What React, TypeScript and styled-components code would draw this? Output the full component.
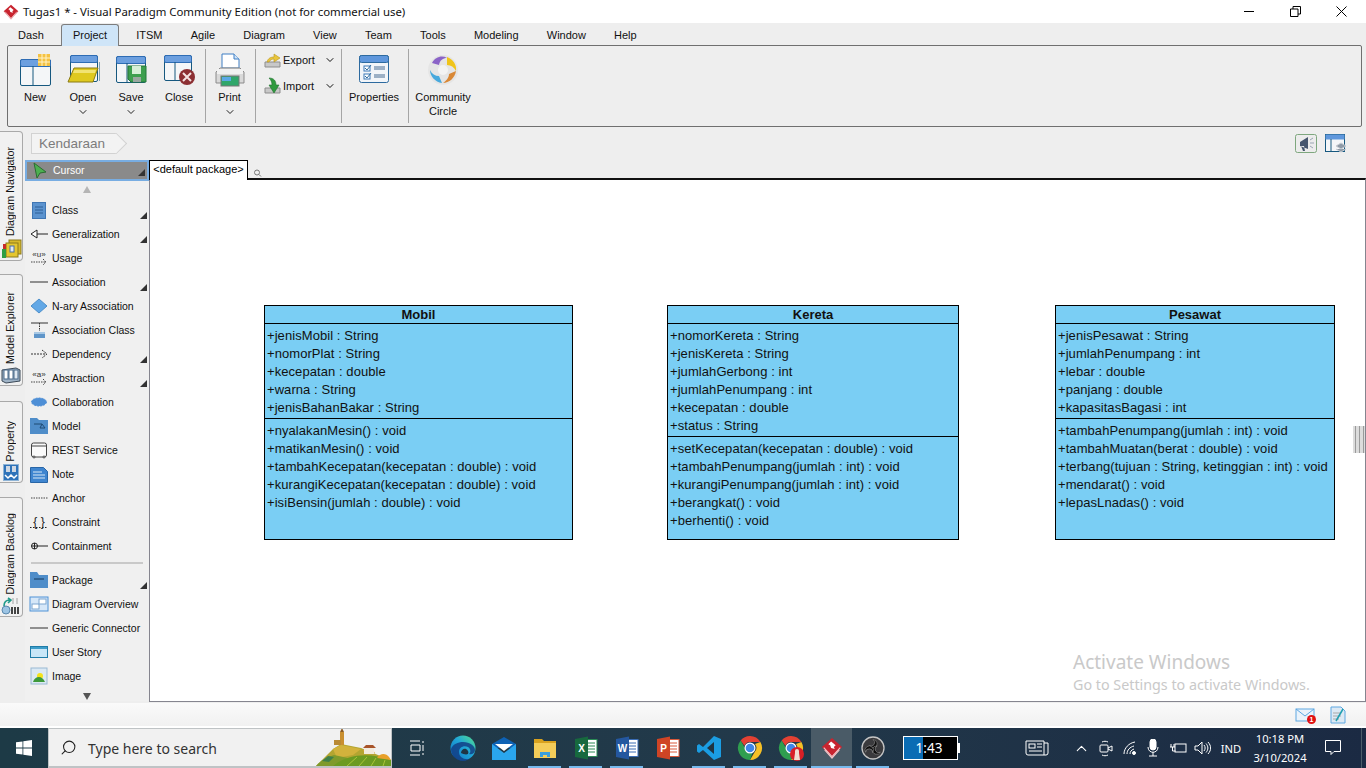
import { ReactNode } from "react";
import styled, { createGlobalStyle } from "styled-components";
import { ChevronDown, ChevronUp, Search } from "lucide-react";

const GlobalStyle = createGlobalStyle`
  html, body { margin: 0; padding: 0; background: #eeeeee; }
  body { font-family: "Liberation Sans", sans-serif; overflow: hidden; }
  * { box-sizing: border-box; }
`;

const uiFont = `"Liberation Sans", Arial, sans-serif`;

/* window chrome */
const Page = styled.div`
  width: 1366px;
  height: 768px;
  display: flex;
  flex-direction: column;
  overflow: hidden;
  background: #eeeeee;
`;

const TitleBar = styled.div`
  height: 23px;
  flex: none;
  background: #fff;
  display: flex;
  align-items: center;
  padding-left: 3px;
`;

const TitleText = styled.span`
  margin-left: 4px;
  font: 11.4px "Noto Sans", sans-serif;
  color: #111;
  white-space: nowrap;
`;

const WindowButtons = styled.div`
  margin-left: auto;
  display: flex;
  height: 23px;
  padding-right: 2px;
`;

const WindowButton = styled.div`
  width: 46px;
  display: flex;
  align-items: center;
  justify-content: center;
`;

const TabRow = styled.div`
  height: 22px;
  flex: none;
  display: flex;
  align-items: flex-end;
  padding-left: 4px;
`;

const Tab = styled.div<{ $active?: boolean }>`
  font: 11px ${uiFont};
  color: #111;
  height: ${(p) => (p.$active ? "22px" : "21px")};
  line-height: ${(p) => (p.$active ? "21px" : "22px")};
  padding: 0 ${(p) => (p.$active ? "11px" : "14.1px")};
  margin: ${(p) => (p.$active ? "0 3px -1px 3px" : "0")};
  position: relative;
  ${(p) =>
    p.$active
      ? `background: #cfe5f8; border: 1px solid #7d7d7d; border-bottom: none; border-radius: 3px 3px 0 0;`
      : ""}
`;

const Ribbon = styled.div`
  margin: 0 4px 0 7px;
  height: 82px;
  flex: none;
  border: 1px solid #6f6f6f;
  border-radius: 2px;
  display: flex;
  padding: 3px 0 3px 3px;
  background: #eeeeee;
`;

const RibbonGroup = styled.div`
  display: flex;
  height: 100%;
  padding-right: 2px;
  border-right: 1px solid #a5a5a5;
  &:last-child { border-right: none; }
`;

const RibbonButton = styled.div<{ $width: number }>`
  width: ${(p) => p.$width}px;
  display: flex;
  flex-direction: column;
  align-items: center;
  font: 11px/14px ${uiFont};
  color: #111;
  text-align: center;
`;

const RibbonIcon = styled.div`
  height: 36px;
  margin-top: 3px;
  margin-bottom: 2px;
  display: flex;
  align-items: center;
  justify-content: center;
`;

const MenuArrow = styled.div`
  height: 14px;
  margin-top: 1px;
  display: flex;
  align-items: center;
  color: #222;
`;

const SmallStack = styled.div`
  width: 83px;
  display: flex;
  flex-direction: column;
  gap: 4px;
  padding: 0 3px 0 8px;
`;

const SmallButton = styled.div`
  height: 22px;
  display: flex;
  align-items: center;
  font: 11px ${uiFont};
  color: #111;
  gap: 1px;
  & > svg:last-child { margin-left: auto; }
`;

/* middle area */
const Workspace = styled.div`
  flex: 1;
  display: flex;
  min-height: 0;
`;

const SideTabs = styled.div`
  width: 25px;
  flex: none;
  padding-top: 4px;
  display: flex;
  flex-direction: column;
`;

const SideTab = styled.div<{ $height: number; $gap: number }>`
  width: 23px;
  flex: none;
  height: ${(p) => p.$height}px;
  margin-bottom: ${(p) => p.$gap}px;
  background: #f1f1f1;
  border: 1px solid #a9a9a9;
  border-left: none;
  border-radius: 0 4px 4px 0;
  display: flex;
  flex-direction: column;
  align-items: center;
  justify-content: flex-end;
  padding-bottom: 1px;
  gap: 3px;
`;

const SideLabel = styled.span`
  writing-mode: vertical-rl;
  transform: rotate(180deg);
  font: 10.7px ${uiFont};
  color: #111;
  white-space: nowrap;
  margin-right: 3px;
`;

const Main = styled.div`
  flex: 1;
  display: flex;
  flex-direction: column;
  min-width: 0;
`;

const CrumbRow = styled.div`
  height: 33px;
  flex: none;
  display: flex;
  align-items: flex-start;
  padding: 6px 0 0 6px;
  position: relative;
`;

const Crumb = styled.div`
  width: 86px;
  height: 21px;
  background: #f3f3f3;
  border: 1px solid #d2d2d2;
  border-right: none;
  font: 13.5px/19px ${uiFont};
  color: #7c7c7c;
  padding-left: 7px;
  position: relative;
  &::after {
    content: "";
    position: absolute;
    right: -7px;
    top: 2px;
    width: 14px;
    height: 14px;
    background: #f3f3f3;
    border-top: 1px solid #d2d2d2;
    border-right: 1px solid #d2d2d2;
    transform: rotate(45deg);
  }
  & > span {
    position: relative;
    z-index: 1;
  }
`;

const CrumbTools = styled.div`
  margin-left: auto;
  display: flex;
  gap: 8px;
  padding-right: 20px;
  padding-top: 1px;
`;

const MainBody = styled.div`
  flex: 1;
  display: flex;
  min-height: 0;
`;

const Palette = styled.div`
  width: 124px;
  flex: none;
  background: #f0f0f0;
  display: flex;
  flex-direction: column;
`;

const PaletteRow = styled.div<{ $selected?: boolean }>`
  height: ${(p) => (p.$selected ? "21px" : "24px")};
  flex: none;
  display: flex;
  align-items: center;
  position: relative;
  font: 10.5px ${uiFont};
  white-space: nowrap;
  color: ${(p) => (p.$selected ? "#fff" : "#111")};
  background: ${(p) => (p.$selected ? "#8a8a8a" : "transparent")};
  border: ${(p) => (p.$selected ? "2px solid #78ade2" : "none")};
  padding: ${(p) => (p.$selected ? "0 0 1px 3px" : "0 0 0 5px")};
`;

const PaletteIconBox = styled.span<{ $selected?: boolean }>`
  width: ${(p) => (p.$selected ? "23px" : "22px")};
  flex: none;
  display: flex;
  align-items: center;
  margin-left: ${(p) => (p.$selected ? "0" : "-1px")};
  margin-right: ${(p) => (p.$selected ? "0" : "1px")};
`;

const Corner = styled.span`
  position: absolute;
  right: 2px;
  bottom: 3px;
  width: 0;
  height: 0;
  border-left: 7px solid transparent;
  border-bottom: 7px solid #333;
`;

const ScrollMark = styled.div<{ $down?: boolean }>`
  height: ${(p) => (p.$down ? "16px" : "17px")};
  flex: none;
  display: flex;
  align-items: center;
  justify-content: center;
  &::before {
    content: "";
    width: 0;
    height: 0;
    border-left: 4px solid transparent;
    border-right: 4px solid transparent;
    ${(p) =>
      p.$down
        ? "border-top: 7px solid #555;"
        : "border-bottom: 7px solid #b5b5b5;"}
  }
`;

const PaletteSeparator = styled.div`
  height: 2px;
  flex: none;
  background: #c9c9c9;
  margin: 4px 6px 4px 6px;
`;

const DiagramColumn = styled.div`
  flex: 1;
  display: flex;
  flex-direction: column;
  min-width: 0;
`;

const PackageRow = styled.div`
  height: 20px;
  flex: none;
  display: flex;
  align-items: flex-start;
`;

const PackageTab = styled.div`
  height: 20px;
  width: 99px;
  background: #fff;
  border: 1px solid #000;
  border-bottom: none;
  font: 11px/17px ${uiFont};
  color: #000;
  text-align: center;
  white-space: nowrap;
  position: relative;
  z-index: 1;
`;

const PackageSearch = styled.svg`
  margin: 8px 0 0 4px;
`;

const Canvas = styled.div`
  height: 524px;
  flex: none;
  margin-top: -2px;
  background: #fff;
  border-top: 2px solid #111;
  border-left: 1px solid #85858f;
  border-right: 1px solid #85858f;
  border-bottom: 1px solid #85858f;
  position: relative;
  overflow: hidden;
`;

const ClassBox = styled.div<{ $left: number; $top: number; $width: number }>`
  position: absolute;
  left: ${(p) => p.$left}px;
  top: ${(p) => p.$top}px;
  width: ${(p) => p.$width}px;
  height: 235px;
  background: #7acef4;
  border: 1px solid #000;
  font-family: "Liberation Sans", Arial, sans-serif;
  font-size: 13px;
  color: #111;
  display: flex;
  flex-direction: column;
`;

const ClassName = styled.div`
  height: 18px;
  line-height: 18px;
  text-align: center;
  font-weight: bold;
  border-bottom: 1px solid #000;
  flex: none;
`;

const ClassSection = styled.div<{ $fill?: boolean }>`
  padding: 3px 0 0 2px;
  flex: ${(p) => (p.$fill ? "1" : "none")};
  ${(p) => (p.$fill ? "" : "border-bottom: 1px solid #000; padding-bottom: 1px;")}
`;

const ClassRow = styled.div`
  height: 18px;
  line-height: 18px;
  white-space: nowrap;
  letter-spacing: 0.07px;
`;

const Watermark = styled.div`
  position: absolute;
  left: 923px;
  top: 470px;
  color: #c9c9c9;
  font: 19px/24px "Noto Sans", sans-serif;
  white-space: nowrap;
  & > small {
    display: block;
    font-size: 14.3px;
    line-height: 22px;
  }
`;

const SplitGrip = styled.div`
  position: absolute;
  right: 0;
  top: 246px;
  width: 12px;
  height: 27px;
  background: repeating-linear-gradient(90deg, #dcdcdc 0 2px, #9a9a9a 2px 3px, #dcdcdc 3px 4px);
`;

const StatusBar = styled.div`
  height: 23px;
  flex: none;
  margin-top: 2px;
  background: linear-gradient(#fafafa, #f1f1f1);
  display: flex;
  align-items: center;
  justify-content: flex-end;
  gap: 14px;
  padding-right: 20px;
`;

/* taskbar */
const WhiteGap = styled.div`
  height: 2px;
  flex: none;
  background: #fff;
`;

const Taskbar = styled.div`
  height: 40px;
  flex: none;
  background: linear-gradient(90deg, #1d3a46 0%, #22394a 55%, #1b2a43 100%);
  display: flex;
  align-items: stretch;
  color: #fff;
`;

const StartButton = styled.div`
  width: 48px;
  display: flex;
  align-items: center;
  justify-content: center;
`;

const SearchBox = styled.div`
  width: 344px;
  background: #f1f1f1;
  border: 1px solid #bfc3c5;
  border-bottom-width: 2px;
  display: flex;
  align-items: center;
  padding-left: 11px;
  position: relative;
  overflow: hidden;
  color: #222;
  font: 14px "Noto Sans", sans-serif;
`;

const SearchText = styled.span`
  margin: 2px 0 0 11px;
  color: #333;
`;

const SearchArt = styled.svg`
  position: absolute;
  right: 0;
  bottom: 0;
`;

const TaskCell = styled.div<{ $width?: number; $running?: boolean; $active?: boolean }>`
  width: ${(p) => p.$width ?? 41}px;
  display: flex;
  align-items: center;
  justify-content: center;
  position: relative;
  background: ${(p) => (p.$active ? "#4a5b67" : "transparent")};
  ${(p) =>
    p.$running
      ? `&::after {
          content: "";
          position: absolute;
          bottom: 0;
          left: ${p.$active ? 0 : 4}px;
          right: ${p.$active ? 0 : 4}px;
          height: 2px;
          background: #76b9ed;
        }`
      : ""}
`;

const TimerBox = styled.div`
  width: 55px;
  height: 24px;
  margin: 8px 0 0 10px;
  padding-right: 3px;
  border: 1px solid #fff;
  background: linear-gradient(90deg, #0a6cb4 0 19px, #000 19px);
  font: 13.5px/22px "Noto Sans", sans-serif;
  text-align: center;
  color: #fff;
  position: relative;
  &::after {
    content: "";
    position: absolute;
    right: -3px;
    top: 6px;
    width: 2px;
    height: 10px;
    background: #fff;
  }
`;

const Tray = styled.div`
  margin-left: auto;
  display: flex;
  align-items: stretch;
`;

const TrayCell = styled.div<{ $width: number }>`
  width: ${(p) => p.$width}px;
  display: flex;
  align-items: center;
  justify-content: center;
  flex-direction: column;
  font: 11.2px/19px "Noto Sans", sans-serif;
  color: #fff;
  white-space: nowrap;
`;

const DesktopEdge = styled.div`
  width: 5px;
  border-left: 1px solid #4b5d69;
`;

/* drawings */
function Frame({ x = 0, y = 0, w = 28, h = 26, split = 12 }: { x?: number; y?: number; w?: number; h?: number; split?: number }) {
  return (
    <g>
      <rect x={x + 0.5} y={y + 0.5} width={w} height={h} rx="1.5" fill="#f4f6f8" stroke="#16587f" />
      <rect x={x + 0.5} y={y + 0.5} width={w} height="7" rx="1.5" fill="#6c9fdf" stroke="#2e6cb4" />
      <path d={`M${x + split} ${y + 7}V${y + h}`} stroke="#16587f" />
    </g>
  );
}

function NewIcon() {
  return (
    <svg width="34" height="34" viewBox="0 0 34 34">
      <Frame x={2} y={6} w={30} h={26} split={13} />
      <rect x="20" y="1" width="12" height="12" fill="#f5c242" />
      <path d="M24 1v12M28 1v12M20 5h12M20 9h12" stroke="#fff3c8" />
    </svg>
  );
}

function OpenIcon() {
  return (
    <svg width="34" height="34" viewBox="0 0 34 34">
      <Frame x={4} y={2} w={27} h={26} split={30} />
      <path d="M8 15h24l-5 14H2z" fill="#dfc91f" stroke="#8a7a12" />
      <path d="M8 17h22l-1 3H7z" fill="#f1e372" />
    </svg>
  );
}

function SaveIcon() {
  return (
    <svg width="34" height="34" viewBox="0 0 34 34">
      <Frame x={2} y={3} w={29} h={26} split={11} />
      <path d="M14 13h18v16H17l-3-3z" fill="#3d9f4e" stroke="#23763a" />
      <rect x="18" y="13" width="9" height="8" fill="#d6efd7" />
      <rect x="19" y="24" width="8" height="5" fill="#9aa7a0" />
    </svg>
  );
}

function CloseIcon() {
  return (
    <svg width="34" height="34" viewBox="0 0 34 34">
      <Frame x={2} y={2} w={27} h={25} split={11} />
      <circle cx="25" cy="24" r="8" fill="#8c2f33" />
      <path d="M21 20l8 8M29 20l-8 8" stroke="#f4e2e2" strokeWidth="2" />
    </svg>
  );
}

function PrintIcon() {
  return (
    <svg width="34" height="36" viewBox="0 0 34 36">
      <path d="M9 2h12l5 5v9H9z" fill="#fff" stroke="#3f7fc4" />
      <path d="M21 2v5h5" fill="#cfe3f7" stroke="#3f7fc4" />
      <path d="M7 16h20l4 4v11H3V20z" fill="#d9d9d9" stroke="#8b8b8b" />
      <rect x="4" y="17" width="26" height="5" fill="#f1f1f1" />
      <rect x="8" y="24" width="18" height="10" fill="#2fa66a" stroke="#777" />
      <rect x="9" y="25" width="9" height="4" fill="#5aa9e6" />
    </svg>
  );
}

function ExportIcon({ up }: { up?: boolean }) {
  return (
    <svg width="18" height="18" viewBox="0 0 18 18">
      <path d="M1 11h15v5H1z" fill="#c8c8c8" stroke="#8d8d8d" />
      <path d={up ? "M3 11c1-4 4-5 7-5V3l6 4-6 4V8c-2 0-4 1-5 3z" : "M5 1c5 0 7 3 7 7h3l-5 8-5-8h3c0-3-1-5-3-7z"} fill={up ? "#e9c53c" : "#2f9a3e"} stroke={up ? "#b8951d" : "#1f6f2b"} strokeWidth="0.6" />
    </svg>
  );
}

function PropertiesIcon() {
  return (
    <svg width="34" height="34" viewBox="0 0 34 34">
      <rect x="2.5" y="2.5" width="29" height="27" rx="2" fill="#f2f5f9" stroke="#2d6a9f" />
      <rect x="2.5" y="2.5" width="29" height="7" rx="2" fill="#5f97dc" stroke="#2d6a9f" />
      <rect x="7" y="13" width="6" height="5" fill="#fff" stroke="#3b79b8" />
      <rect x="7" y="21" width="6" height="5" fill="#fff" stroke="#3b79b8" />
      <path d="M8 15l2 2 4-5M8 23l2 2 4-5" stroke="#2d6a9f" fill="none" />
      <rect x="17" y="13" width="11" height="4" fill="#9cb0c6" />
      <rect x="17" y="21" width="11" height="4" fill="#9cb0c6" />
    </svg>
  );
}

function CircleIcon() {
  return (
    <svg width="32" height="32" viewBox="0 0 32 32">
      <circle cx="16" cy="16" r="15" fill="#e5e5e5" />
      <path d="M5 9c3-6 10-8 15-5-4 0-7 2-8 7z" fill="#8a63c7" />
      <path d="M20 3c6 2 10 8 9 14-2-4-5-6-9-6z" fill="#f0c419" />
      <path d="M29 17c-1 7-7 12-13 12 3-2 6-5 6-9z" fill="#d98836" />
      <path d="M15 29C8 28 3 22 3 16c2 4 5 6 9 6z" fill="#47a9dd" />
      <circle cx="16" cy="16" r="5" fill="#f3f3f3" />
    </svg>
  );
}

const paletteIcons: Record<string, ReactNode> = {
  Cursor: <path d="M4 3l12 9-6 1-3 5z" fill="#4cb050" stroke="#2c6c33" />,
  Class: (
    <g>
      <rect x="3.500" y="2.500" width="13" height="16" fill="#5b93cf" stroke="#3f76b3" />
      <path d="M6 7h8M6 10h8M6 13h8" stroke="#2f5f95" />
    </g>
  ),
  Generalization: <path d="M8 6l-6 4 6 4zM8 10h11" fill="#fff" stroke="#222" />,
  Usage: (
    <g>
      <text x="10" y="9" fontSize="8" fontFamily="Liberation Sans" textAnchor="middle" fill="#333">«u»</text>
      <path d="M2 14h15M14 11l3 3-3 3" stroke="#444" fill="none" strokeDasharray="1.500 1" />
    </g>
  ),
  Association: <path d="M1 10h18" stroke="#777" strokeWidth="1.600" />,
  "N-ary Association": <path d="M10 3l8 7-8 7-8-7z" fill="#63a8e6" stroke="#4d8fcb" />,
  "Association Class": (
    <g>
      <path d="M2 3h17" stroke="#333" />
      <path d="M10.500 3v8" stroke="#333" strokeDasharray="1.500 1" />
      <rect x="5" y="12" width="11" height="6" fill="#5f95c9" />
      <rect x="5" y="12" width="11" height="2" fill="#a8c8e4" />
    </g>
  ),
  Dependency: <path d="M2 10h15M13 6l5 4-5 4" stroke="#333" fill="none" strokeDasharray="2 1" />,
  Abstraction: (
    <g>
      <text x="10" y="9" fontSize="8" fontFamily="Liberation Sans" textAnchor="middle" fill="#333">«a»</text>
      <path d="M2 14h15M14 11l3 3-3 3" stroke="#444" fill="none" strokeDasharray="1.500 1" />
    </g>
  ),
  Collaboration: <ellipse cx="10" cy="10" rx="7.500" ry="4" fill="#4e8fd6" stroke="#4e8fd6" strokeDasharray="2 1" />,
  Model: (
    <g>
      <path d="M1 2h7l2 2h9v14H1z" fill="#4f8dc9" />
      <path d="M5 8h8M13 8l-2 4h5z" stroke="#1f4a73" fill="none" />
    </g>
  ),
  "REST Service": (
    <g fill="#fafafa" stroke="#444">
      <rect x="2.500" y="3" width="15" height="14" rx="2" />
      <path d="M2.500 6h15" />
      <circle cx="5" cy="17" r="1" />
      <circle cx="15" cy="17" r="1" />
    </g>
  ),
  Note: (
    <g>
      <path d="M1.500 3.500h13l4 4v11h-17z" fill="#3f85cf" stroke="#2865a6" />
      <path d="M4 8h9M4 11h12M4 14h12" stroke="#d8e8f6" />
    </g>
  ),
  Anchor: <path d="M2 10h17" stroke="#444" strokeDasharray="1.500 1" />,
  Constraint: (
    <g>
      <text x="10" y="14" fontSize="12" fontFamily="Liberation Sans" textAnchor="middle" fill="#222">{"{ }"}</text>
      <path d="M1 15.500h18" stroke="#222" strokeDasharray="1.500 1.500" />
    </g>
  ),
  Containment: (
    <g fill="none" stroke="#222">
      <circle cx="5.500" cy="10" r="3" />
      <path d="M2.500 10h16.500M5.500 7v6" />
    </g>
  ),
  Package: (
    <g>
      <path d="M1 2h7l2 3h9v13H1z" fill="#4f8dc9" />
      <path d="M5 9h10" stroke="#17385a" />
    </g>
  ),
  "Diagram Overview": (
    <g>
      <rect x="1" y="3" width="18" height="14" fill="#d6e7f8" stroke="#4e92d6" />
      <rect x="3" y="10" width="7" height="5" fill="#fff" stroke="#7ca6cf" />
      <rect x="10" y="5" width="7" height="5" fill="#fff" stroke="#7ca6cf" />
    </g>
  ),
  "Generic Connector": <path d="M1 10h18" stroke="#777" strokeWidth="1.600" />,
  "User Story": (
    <g>
      <rect x="1.500" y="4.500" width="17" height="11" fill="#c8e6f7" stroke="#1f7ca8" />
      <rect x="2" y="5" width="16" height="2" fill="#3d9dc9" />
    </g>
  ),
  Image: (
    <g>
      <rect x="2" y="2" width="16" height="16" fill="#dbe9f4" stroke="#9ab9d3" />
      <circle cx="11" cy="10" r="3" fill="#f4e21c" />
      <path d="M4 16c2-6 9-7 12 0z" fill="#3d9a3b" />
    </g>
  ),
};

function TabIcon({ kind }: { kind: string }) {
  if (kind === "nav")
    return (
      <svg width="21" height="20" viewBox="0 0 21 20">
        <rect x="8" y="1" width="12" height="14" fill="#d8b92a" stroke="#8c7a1c" />
        <rect x="5" y="4" width="12" height="14" fill="#e5c62f" stroke="#8c7a1c" />
        <rect x="9" y="7" width="4" height="6" fill="#dfe9f4" stroke="#4a6fa5" />
        <rect x="1" y="10" width="4" height="9" fill="#2f9e44" />
        <rect x="2" y="5" width="3" height="5" fill="#c92a2a" />
      </svg>
    );
  if (kind === "model")
    return (
      <svg width="20" height="17" viewBox="0 0 20 17">
        <path d="M1 3l14-2 4 2v11l-14 2-4-2z" fill="#9fb3c6" stroke="#3c4a58" />
        <rect x="3" y="3" width="4" height="9" fill="#fff" stroke="#4b6a8a" />
        <rect x="8" y="3" width="4" height="9" fill="#fff" stroke="#4b6a8a" />
        <rect x="13" y="3" width="4" height="9" fill="#dfe8f1" stroke="#4b6a8a" />
      </svg>
    );
  if (kind === "prop")
    return (
      <svg width="16" height="17" viewBox="0 0 16 17">
        <rect x="0.500" y="0.500" width="15" height="16" fill="#2f73b9" stroke="#8fb4d6" />
        <rect x="3" y="2" width="4" height="6" fill="#cfd8e3" />
        <rect x="9" y="2" width="4" height="6" fill="#cfd8e3" />
        <path d="M2 11l3 3 3-3 3 3 3-3" stroke="#fff" fill="none" strokeWidth="1.500" />
      </svg>
    );
  return (
    <svg width="20" height="18" viewBox="0 0 20 18">
      <circle cx="5" cy="13" r="4" fill="#9cc4e4" stroke="#5a88ad" />
      <path d="M3 9c0-4 2-6 6-6M7 1l3 2-3 3" stroke="#1f9a8a" fill="none" strokeWidth="1.600" />
      <path d="M11 1h2v6h-2zM15 1h2v6h-2z" fill="#c9c9c9" />
      <path d="M10 10h2v7h-2zM13 10h2v7h-2zM16 10h2v7h-2z" fill="#444" />
    </svg>
  );
}

function VpLogo({ size = 16 }: { size?: number }) {
  return (
    <svg width={size} height={size} viewBox="0 0 24 24">
      <path d="M12 1l11 10-11 12L1 11z" fill="#c8242f" />
      <path d="M4 14l8 9 8-9" fill="none" stroke="#f2c6c9" strokeWidth="1.200" />
      <path d="M3 11.500l9 10 9-10" fill="none" stroke="#f2c6c9" strokeWidth="1.200" />
      <path d="M11 5l5 4-2 2 1 2-4-1-1-3-2-1z" fill="#fff" />
    </svg>
  );
}

function Chrome({ badge }: { badge?: boolean }) {
  return (
    <svg width="26" height="26" viewBox="0 0 26 26">
      <path d="M13 1a12 12 0 0 1 10.400 6H13a6 6 0 0 0-5.600 3.800L3.600 5.500A12 12 0 0 1 13 1z" fill="#e34133" />
      <path d="M23.400 7A12 12 0 0 1 13 25l5-8.500A6 6 0 0 0 18 9z" fill="#f6c026" />
      <path d="M3.600 5.500L8 13a5 5 0 0 0 7.600 4.600L13 25A12 12 0 0 1 3.600 5.500z" fill="#2f9e4f" />
      <circle cx="13" cy="13" r="5.500" fill="#fff" />
      <circle cx="13" cy="13" r="4.300" fill="#3f86e8" />
      {badge && (
        <g>
          <circle cx="19" cy="19" r="7" fill="#d81f26" />
          <path d="M17 16a2 2 0 0 1 4 0v2l1 7h-6l1-7z" fill="#f1ddd0" />
        </g>
      )}
    </svg>
  );
}

function OfficeIcon({ bg, letter, lines }: { bg: string; letter: string; lines: string }) {
  return (
    <svg width="24" height="24" viewBox="0 0 24 24">
      <rect x="12" y="3.500" width="11" height="17" fill="#fff" stroke={lines} />
      <path d="M14 7h7M14 10h7M14 13h7M14 16h7" stroke={lines} />
      <path d="M1 3l13-2.500v23L1 21z" fill={bg} />
      <text x="7.500" y="15.500" fontFamily="Liberation Sans" fontWeight="bold" fontSize="10" fill="#fff" textAnchor="middle">
        {letter}
      </text>
    </svg>
  );
}

const classes = [
  {
    name: "Mobil",
    left: 114,
    width: 309,
    attrs: ["+jenisMobil : String", "+nomorPlat : String", "+kecepatan : double", "+warna : String", "+jenisBahanBakar : String"],
    ops: ["+nyalakanMesin() : void", "+matikanMesin() : void", "+tambahKecepatan(kecepatan : double) : void", "+kurangiKecepatan(kecepatan : double) : void", "+isiBensin(jumlah : double) : void"],
  },
  {
    name: "Kereta",
    left: 517,
    width: 292,
    attrs: ["+nomorKereta : String", "+jenisKereta : String", "+jumlahGerbong : int", "+jumlahPenumpang : int", "+kecepatan : double", "+status : String"],
    ops: ["+setKecepatan(kecepatan : double) : void", "+tambahPenumpang(jumlah : int) : void", "+kurangiPenumpang(jumlah : int) : void", "+berangkat() : void", "+berhenti() : void"],
  },
  {
    name: "Pesawat",
    left: 905,
    width: 280,
    attrs: ["+jenisPesawat : String", "+jumlahPenumpang : int", "+lebar : double", "+panjang : double", "+kapasitasBagasi : int"],
    ops: ["+tambahPenumpang(jumlah : int) : void", "+tambahMuatan(berat : double) : void", "+terbang(tujuan : String, ketinggian : int) : void", "+mendarat() : void", "+lepasLnadas() : void"],
  },
];

const tabs = ["Dash", "Project", "ITSM", "Agile", "Diagram", "View", "Team", "Tools", "Modeling", "Window", "Help"];

const paletteTop: [string, boolean][] = [
  ["Class", true],
  ["Generalization", true],
  ["Usage", false],
  ["Association", true],
  ["N-ary Association", false],
  ["Association Class", false],
  ["Dependency", true],
  ["Abstraction", true],
  ["Collaboration", false],
  ["Model", false],
  ["REST Service", false],
  ["Note", false],
  ["Anchor", false],
  ["Constraint", false],
  ["Containment", false],
];

const paletteBottom: [string, boolean][] = [
  ["Package", true],
  ["Diagram Overview", false],
  ["Generic Connector", false],
  ["User Story", false],
  ["Image", false],
];

function Item({ name, corner, selected }: { name: string; corner?: boolean; selected?: boolean }) {
  return (
    <PaletteRow $selected={selected}>
      <PaletteIconBox $selected={selected}>
        <svg width="21" height="20" viewBox="0 0 21 20">
          {paletteIcons[name]}
        </svg>
      </PaletteIconBox>
      {name}
      {corner && <Corner />}
    </PaletteRow>
  );
}

export default function App() {
  return (
    <Page>
      <GlobalStyle />
      <TitleBar>
        <VpLogo />
        <TitleText>Tugas1 * - Visual Paradigm Community Edition (not for commercial use)</TitleText>
        <WindowButtons>
          <WindowButton>
            <svg width="10" height="2"><path d="M0 .5h10" stroke="#000" /></svg>
          </WindowButton>
          <WindowButton>
            <svg width="11" height="11"><path d="M.5 3h7.500v7.500H.5zM3 3V.5h7.500V8H8" fill="none" stroke="#000" /></svg>
          </WindowButton>
          <WindowButton>
            <svg width="11" height="11"><path d="M.5.5l10 10M10.500.5l-10 10" stroke="#000" /></svg>
          </WindowButton>
        </WindowButtons>
      </TitleBar>

      <TabRow>
        {tabs.map((t) => (
          <Tab key={t} $active={t === "Project"}>{t}</Tab>
        ))}
      </TabRow>

      <Ribbon>
        <RibbonGroup>
          <RibbonButton $width={48}><RibbonIcon><NewIcon /></RibbonIcon>New</RibbonButton>
          <RibbonButton $width={48}>
            <RibbonIcon><OpenIcon /></RibbonIcon>Open
            <MenuArrow><ChevronDown size={12} strokeWidth={2} /></MenuArrow>
          </RibbonButton>
          <RibbonButton $width={48}>
            <RibbonIcon><SaveIcon /></RibbonIcon>Save
            <MenuArrow><ChevronDown size={12} strokeWidth={2} /></MenuArrow>
          </RibbonButton>
          <RibbonButton $width={48}><RibbonIcon><CloseIcon /></RibbonIcon>Close</RibbonButton>
        </RibbonGroup>
        <RibbonGroup>
          <RibbonButton $width={47}>
            <RibbonIcon><PrintIcon /></RibbonIcon>Print
            <MenuArrow><ChevronDown size={12} strokeWidth={2} /></MenuArrow>
          </RibbonButton>
        </RibbonGroup>
        <RibbonGroup>
          <SmallStack>
            <SmallButton><ExportIcon up />Export<ChevronDown size={12} strokeWidth={2} /></SmallButton>
            <SmallButton><ExportIcon />Import<ChevronDown size={12} strokeWidth={2} /></SmallButton>
          </SmallStack>
        </RibbonGroup>
        <RibbonGroup>
          <RibbonButton $width={64}><RibbonIcon><PropertiesIcon /></RibbonIcon>Properties</RibbonButton>
        </RibbonGroup>
        <RibbonGroup>
          <RibbonButton $width={68}><RibbonIcon><CircleIcon /></RibbonIcon>Community<br />Circle</RibbonButton>
        </RibbonGroup>
      </Ribbon>

      <Workspace>
        <SideTabs>
          <SideTab $height={130} $gap={13}><SideLabel>Diagram Navigator</SideLabel><TabIcon kind="nav" /></SideTab>
          <SideTab $height={112} $gap={15}><SideLabel>Model Explorer</SideLabel><TabIcon kind="model" /></SideTab>
          <SideTab $height={82} $gap={14}><SideLabel>Property</SideLabel><TabIcon kind="prop" /></SideTab>
          <SideTab $height={120} $gap={0}><SideLabel>Diagram Backlog</SideLabel><TabIcon kind="backlog" /></SideTab>
        </SideTabs>
        <Main>
          <CrumbRow>
            <Crumb><span>Kendaraan</span></Crumb>
            <CrumbTools>
              <svg width="22" height="20" viewBox="0 0 22 20">
                <rect x="0.500" y="0.500" width="21" height="18" rx="2" fill="#ececec" stroke="#7ea77e" />
                <path d="M5 8l8-5v12L5 12zM6 12l2 5h2l-1-5" fill="#46566e" />
                <path d="M15 6l3-2M15 9h4M15 12l3 2" stroke="#9aa5b3" />
              </svg>
              <svg width="21" height="20" viewBox="0 0 21 20">
                <rect x="0.500" y="0.500" width="19" height="17" fill="#f4f6f8" stroke="#16587f" />
                <rect x="0.500" y="0.500" width="19" height="5" fill="#5f97dc" />
                <path d="M6 5v13" stroke="#16587f" />
                <path d="M11 12l5-3 5 3-5 3zM11 15l5 3 5-3" fill="#8f9ba8" stroke="#c8cdd3" />
              </svg>
            </CrumbTools>
          </CrumbRow>
          <MainBody>
            <Palette>
              <Item name="Cursor" corner selected />
              <ScrollMark />
              {paletteTop.map(([n, c]) => <Item key={n} name={n} corner={c} />)}
              <PaletteSeparator />
              {paletteBottom.map(([n, c]) => <Item key={n} name={n} corner={c} />)}
              <ScrollMark $down />
            </Palette>
            <DiagramColumn>
              <PackageRow>
                <PackageTab>&lt;default package&gt;</PackageTab>
                <PackageSearch width="12" height="10" viewBox="0 0 12 10">
                  <circle cx="5" cy="4.500" r="2.500" fill="none" stroke="#777" />
                  <path d="M7 6.500l2 2" stroke="#777" />
                </PackageSearch>
              </PackageRow>
              <Canvas>
                {classes.map((c) => (
                  <ClassBox key={c.name} $left={c.left} $top={125} $width={c.width}>
                    <ClassName>{c.name}</ClassName>
                    <ClassSection>
                      {c.attrs.map((a) => <ClassRow key={a}>{a}</ClassRow>)}
                    </ClassSection>
                    <ClassSection $fill>
                      {c.ops.map((o) => <ClassRow key={o}>{o}</ClassRow>)}
                    </ClassSection>
                  </ClassBox>
                ))}
                <Watermark>
                  Activate Windows
                  <small>Go to Settings to activate Windows.</small>
                </Watermark>
                <SplitGrip />
              </Canvas>
            </DiagramColumn>
          </MainBody>
        </Main>
      </Workspace>

      <StatusBar>
        <svg width="21" height="18" viewBox="0 0 21 18">
          <rect x="1" y="3" width="18" height="12" fill="#eaf3fb" stroke="#5fa8e2" />
          <path d="M1 3l9 7 9-7" fill="none" stroke="#5fa8e2" />
          <circle cx="16.500" cy="13.500" r="4.500" fill="#e01010" />
          <text x="16.500" y="16" fontSize="7" fontWeight="bold" fontFamily="Liberation Sans" fill="#fff" textAnchor="middle">1</text>
        </svg>
        <svg width="16" height="18" viewBox="0 0 16 18">
          <path d="M1 1h10l4 4v12H1z" fill="#dce9f4" stroke="#5fa8e2" />
          <path d="M3 7h8M3 10h8M3 13h6" stroke="#a8a8a8" />
          <path d="M6 15l7-12" stroke="#1f9fb0" strokeWidth="1.500" />
        </svg>
      </StatusBar>
      <WhiteGap />

      <Taskbar>
        <StartButton>
          <svg width="16" height="16" viewBox="0 0 16 16" fill="#fff">
            <path d="M0 2.300l6.500-.9v6.200H0zM7.300 1.300L16 0v7.600H7.300zM0 8.400h6.500v6.200L0 13.700zM7.300 8.400H16V16l-8.700-1.200z" />
          </svg>
        </StartButton>
        <SearchBox>
          <Search size={17} strokeWidth={1.500} color="#222" style={{ transform: "scaleX(-1)" }} />
          <SearchText>Type here to search</SearchText>
          <SearchArt width="80" height="38" viewBox="0 0 80 38">
            <path d="M5 38L22 21l8-5 20 4 17 7 13 5v6z" fill="#b3a531" />
            <path d="M22 21l8-4 20 4-8 6-16 3z" fill="#d2b23c" />
            <path d="M5 38c5-6 11-9 18-11l14 3-12 8z" fill="#7f9a2c" />
            <path d="M11 33l6-5 6 1-5 5z" fill="#3f7f4a" />
            <path d="M22 38c14-12 36-14 58-6v6z" fill="#6c9a21" />
            <path d="M36 38l10-9M48 38l8-9M60 38l5-8M72 38l2-6" stroke="#a9c43a" />
            <path d="M52 22c6-2 10 0 12 3l-10 1z" fill="#e0a030" />
            <rect x="29" y="4" width="4" height="13" fill="#c98f30" />
            <path d="M29 4l2-4 2 4z" fill="#8a5a22" />
            <rect x="23" y="12" width="7" height="5" fill="#b98a35" />
            <rect x="53" y="20" width="10" height="6" fill="#f2eadc" />
            <path d="M52 20l3-3h7l3 3z" fill="#a8542a" />
            <path d="M66 30c3-5 9-5 12-1l2 3z" fill="#e8a02a" />
          </SearchArt>
        </SearchBox>
        <TaskCell $width={50}>
          <svg width="16" height="16" viewBox="0 0 16 16" fill="none" stroke="#fff">
            <path d="M1 1h10M1 15h10M2 5h9v6H2zM14 1v2M14 5v6M14 13v2" />
          </svg>
        </TaskCell>
        <TaskCell>
          <svg width="26" height="26" viewBox="0 0 26 26">
            <defs>
              <linearGradient id="edgeA" x1="0" y1="1" x2="1" y2="0">
                <stop offset="0" stopColor="#0f6fc0" />
                <stop offset="0.550" stopColor="#20a6d8" />
                <stop offset="1" stopColor="#55e08a" />
              </linearGradient>
            </defs>
            <circle cx="13" cy="13" r="12.500" fill="url(#edgeA)" />
            <path d="M25 15c0 3-3 5-6 4 2-1 2-5-1-7-4-2-9 0-9 5 0 5 5 8 10 7-2 1.500-4 2-6 2C6 26 1 20 1 14 3 9 8 7 13 7c7 0 12 4 12 8z" fill="#123f86" opacity="0.850" />
            <path d="M11 18c0-3 3-5 5-4 2 1 3 3 2 5-2 1-5 0-7-1z" fill="#1f3543" />
          </svg>
        </TaskCell>
        <TaskCell>
          <svg width="24" height="23" viewBox="0 0 24 23">
            <path d="M12 0l12 7v4H0V7z" fill="#0e62b5" />
            <path d="M0 7v16h24V7l-12 9z" fill="#2aa6ee" />
            <path d="M3 7h18l-9 7z" fill="#fff" />
          </svg>
        </TaskCell>
        <TaskCell $running>
          <svg width="22" height="20" viewBox="0 0 22 20">
            <path d="M0 1h8l2 2h12v4H0z" fill="#d9a21e" />
            <rect y="5" width="22" height="15" fill="#f4cd59" />
            <path d="M6 19v-5h10v5h-3v-2H9v2z" fill="#3a9fdc" />
          </svg>
        </TaskCell>
        <TaskCell $running><OfficeIcon bg="#17693e" letter="X" lines="#2a8a55" /></TaskCell>
        <TaskCell $running><OfficeIcon bg="#24579f" letter="W" lines="#3a6cb4" /></TaskCell>
        <TaskCell><OfficeIcon bg="#cf4425" letter="P" lines="#d9593a" /></TaskCell>
        <TaskCell $running>
          <svg width="24" height="24" viewBox="0 0 24 24">
            <path d="M17 0l7 3v18l-7 3-11-10-4 3-2-1.500V9.500L2 8l4 3z" fill="#1b9de2" />
            <path d="M17 6l-7 6 7 6z" fill="#1f3543" />
          </svg>
        </TaskCell>
        <TaskCell $running><Chrome /></TaskCell>
        <TaskCell $running><Chrome badge /></TaskCell>
        <TaskCell $running $active><VpLogo size={22} /></TaskCell>
        <TaskCell $running>
          <svg width="24" height="24" viewBox="0 0 24 24">
            <circle cx="12" cy="12" r="11" fill="#3a3a3d" stroke="#c5c5c5" strokeWidth="1.300" />
            {[0, 120, 240].map((a) => (
              <path key={a} transform={`rotate(${a} 12 12)`} d="M12 3.500a4.200 4.200 0 1 1-3.800 6 3.200 3.200 0 1 0 3.800-6z" fill="#0e0e0e" stroke="#9a9a9a" strokeWidth="0.500" />
            ))}
          </svg>
        </TaskCell>
        <TimerBox>1:43</TimerBox>
        <Tray>
          <TrayCell $width={44}>
            <svg width="24" height="16" viewBox="0 0 24 16" fill="none" stroke="#fff">
              <path d="M1 1h18v14H3a2 2 0 0 1-2-2zM19 3h4v10a2 2 0 0 1-2 2h-2" />
              <rect x="4" y="4" width="6" height="4" />
              <path d="M12 4h5M12 7h5M4 11h13" />
            </svg>
          </TrayCell>
          <TrayCell $width={10} />
          <TrayCell $width={24}><ChevronUp size={17} strokeWidth={1.500} /></TrayCell>
          <TrayCell $width={26}>
            <svg width="14" height="18" viewBox="0 0 14 18" fill="none" stroke="#fff">
              <rect x="1" y="6" width="8" height="7" rx="1" />
              <path d="M9 9l4-2v5l-4-2M3 3c2-1 4-1 6 0M3 16c2 1 4 1 6 0" />
            </svg>
          </TrayCell>
          <TrayCell $width={22}>
            <svg width="14" height="14" viewBox="0 0 14 14" fill="none" stroke="#fff">
              <path d="M1 13C1 7 6 2 12 1M4 13c0-4 3-7 7-8M7 13c0-2 1-4 4-5" />
              <circle cx="11" cy="12" r="1.500" fill="#fff" />
            </svg>
          </TrayCell>
          <TrayCell $width={24}>
            <svg width="12" height="18" viewBox="0 0 12 18" fill="none" stroke="#fff">
              <rect x="3" y="0" width="6" height="11" rx="3" fill="#fff" />
              <path d="M1 8c0 7 10 7 10 0M6 13v4M2 17h8" />
            </svg>
          </TrayCell>
          <TrayCell $width={26}>
            <svg width="17" height="12" viewBox="0 0 17 12" fill="none" stroke="#fff">
              <rect x="5" y="2" width="11" height="8" />
              <path d="M1 2v3M4 2v3M0 5h5M2.500 5v4h3" />
            </svg>
          </TrayCell>
          <TrayCell $width={22}>
            <svg width="17" height="14" viewBox="0 0 17 14" fill="none" stroke="#fff">
              <path d="M1 5h3l4-4v12l-4-4H1zM10 4c1.500 2 1.500 4 0 6M12 2.500c2.500 3 2.500 6 0 9M14 1c3.500 4 3.500 8 0 12" />
            </svg>
          </TrayCell>
          <TrayCell $width={36}>IND</TrayCell>
          <TrayCell $width={62}>
            <span>10:18 PM</span>
            <span>3/10/2024</span>
          </TrayCell>
          <TrayCell $width={44}>
            <svg width="16" height="16" viewBox="0 0 16 16" fill="none" stroke="#fff">
              <path d="M.5.500h15v11H9l-3 3v-3H.5z" />
            </svg>
          </TrayCell>
          <TrayCell $width={6} />
          <DesktopEdge />
        </Tray>
      </Taskbar>
    </Page>
  );
}
